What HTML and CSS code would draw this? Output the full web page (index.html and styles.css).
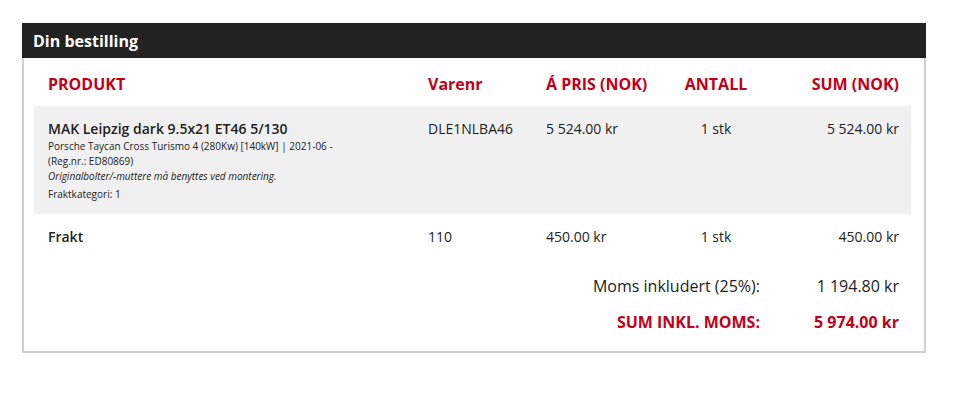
FILE: index.html
```html
<!DOCTYPE html>
<html lang="no">
<head>
<meta charset="utf-8">
<title>Din bestilling</title>
<link rel="stylesheet" href="styles.css">
</head>
<body>
<section class="order">
  <h2 class="order-title">Din bestilling</h2>
  <div class="order-body">
    <table class="order-table">
      <colgroup>
        <col class="c-prod"><col class="c-nr"><col class="c-price"><col class="c-qty"><col class="c-sum">
      </colgroup>
      <thead>
        <tr>
          <th class="left">PRODUKT</th>
          <th class="left">Varenr</th>
          <th class="left">Á PRIS (NOK)</th>
          <th class="center">ANTALL</th>
          <th class="right">SUM (NOK)</th>
        </tr>
      </thead>
      <tbody>
        <tr class="item">
          <td>
            <div class="item-name">MAK Leipzig dark 9.5x21 ET46 5/130</div>
            <div class="item-car">Porsche Taycan Cross Turismo 4 (280Kw) [140kW] | 2021-06 -<br>(Reg.nr.: ED80869)</div>
            <div class="item-note">Originalbolter/-muttere må benyttes ved montering.</div>
            <div class="item-cat">Fraktkategori: 1</div>
          </td>
          <td>DLE1NLBA46</td>
          <td>5 524.00 kr</td>
          <td class="center">1 stk</td>
          <td class="right">5 524.00 kr</td>
        </tr>
        <tr class="freight">
          <td class="strong">Frakt</td>
          <td>110</td>
          <td>450.00 kr</td>
          <td class="center">1 stk</td>
          <td class="right">450.00 kr</td>
        </tr>
        <tr class="vat">
          <td colspan="4" class="right">Moms inkludert (25%):</td>
          <td class="right">1 194.80 kr</td>
        </tr>
        <tr class="total">
          <td colspan="4" class="right">SUM INKL. MOMS:</td>
          <td class="right">5 974.00 kr</td>
        </tr>
      </tbody>
    </table>
  </div>
</section>
</body>
</html>
```

FILE: styles.css
```css
* { box-sizing: border-box; }
html, body { margin: 0; padding: 0; background: #fff; }
body {
  font-family: "Open Sans", "Noto Sans", sans-serif;
  color: #222;
  padding: 23px 0 0 22px;
}
.order {
  width: 904px;
}
.order-title {
  margin: 0;
  height: 35px;
  background: #222;
  color: #fff;
  font-size: 16px;
  font-weight: 700;
  line-height: 33px;
  padding: 2px 0 0 11px;
}
.order-body {
  border: 2px solid #d0d0d0;
  border-top: none;
  padding: 8px 13px 11px 10px;
}
.order-table {
  width: 100%;
  border-collapse: collapse;
  table-layout: fixed;
}
.c-prod { width: 380px; }
.c-nr { width: 118px; }
.c-price { width: 128px; }
.c-qty { width: 112px; }
.c-sum { width: 139px; }
.order-table th {
  color: #c20019;
  font-size: 16px;
  font-weight: 700;
  line-height: 20px;
  padding: 8px 12px 12px 14px;
  vertical-align: middle;
}
.order-table td {
  font-size: 14px;
  line-height: 20px;
  padding: 13px 12px 13px 14px;
  vertical-align: top;
}
.left { text-align: left; }
.center { text-align: center; }
.right { text-align: right; }
.order-table th.center, .order-table td.center { padding-left: 12px; }
.item td { background: #f0f0f0; padding-bottom: 12px; }
.item-name {
  font-size: 14px;
  font-weight: 600;
  line-height: 20px;
}
.item-car, .item-note, .item-cat {
  font-size: 10px;
  line-height: 15px;
}
.item-note { font-style: italic; }
.item-cat { margin-top: 3px; }
.order-table .freight td { padding-top: 11px; padding-bottom: 13px; line-height: 24px; font-size: 14px; }
.order-table .freight td.strong { font-weight: 600; }
.order-table .vat td {
  font-size: 16px;
  line-height: 24px;
  padding-top: 12px;
  padding-bottom: 6px;
}
.order-table .total td {
  font-size: 16px;
  line-height: 24px;
  padding-top: 6px;
  padding-bottom: 6px;
  color: #c20019;
  font-weight: 700;
}
```
